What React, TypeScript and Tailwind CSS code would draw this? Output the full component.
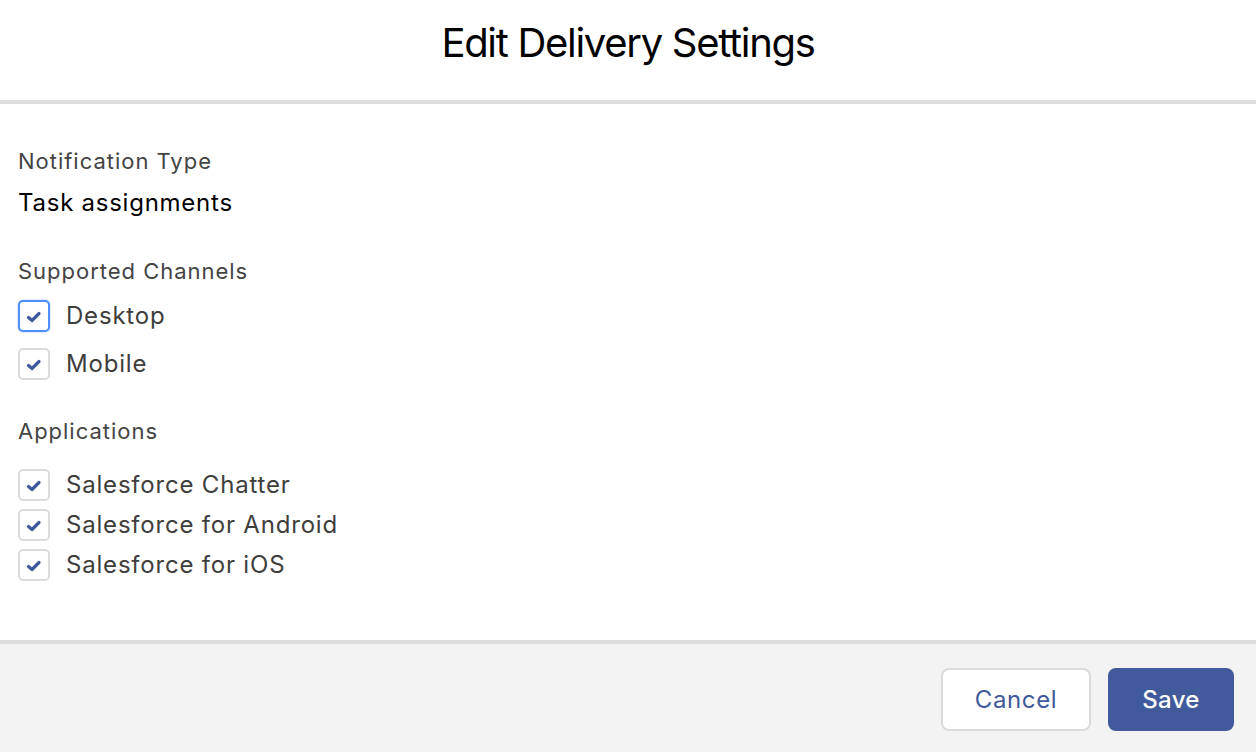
import React from 'react'

function Check({ label, focused }: { label: string; focused?: boolean }) {
    return (
        <label className="flex items-center gap-[16px] h-8">
            <span
                className={
                    focused
                        ? 'w-8 h-8 rounded-[5px] border-2 border-[#4f8ff7] bg-white flex items-center justify-center shadow-[0_0_2px_#8fb8fb]'
                        : 'w-8 h-8 rounded-[5px] border-2 border-[#dddbda] bg-white flex items-center justify-center'
                }
            >
                <svg width="16" height="14" viewBox="0 0 16 14" className="mt-[2px]">
                    <path d="M2.5 7.5 L6 10.5 L13 3.5" fill="none" stroke="#3f5a9c" strokeWidth="3.2" strokeLinecap="round" strokeLinejoin="round" />
                </svg>
            </span>
            <span className="text-[24px] text-[#3e3e3c] leading-8 tracking-[0.8px]">{label}</span>
        </label>
    )
}

export default function App() {
    return (
        <div className="w-[1256px] h-[752px] bg-white flex flex-col font-['Inter','Liberation_Sans',sans-serif]">
            {/* Header */}
            <div className="h-[104px] border-b-4 border-[#dddddd] flex items-center justify-center pb-[14px]">
                <h1 className="text-[40px] leading-[48px] text-black tracking-[-1.3px]">Edit Delivery Settings</h1>
            </div>

            {/* Body */}
            <div className="flex-1 px-[18px] pt-[43px] flex flex-col">
                <div className="text-[22px] leading-7 text-[#444444] tracking-[0.98px]">Notification Type</div>
                <div className="mt-3 text-[24px] leading-8 text-black tracking-[0.75px]">Task assignments</div>

                <div className="mt-[38px] text-[22px] leading-7 text-[#444444] tracking-[0.98px]">Supported Channels</div>
                <div className="mt-[15px] flex flex-col gap-4">
                    <Check label="Desktop" focused />
                    <Check label="Mobile" />
                </div>

                <div className="mt-[37px] text-[22px] leading-7 text-[#444444] tracking-[0.98px]">Applications</div>
                <div className="mt-6 flex flex-col gap-2">
                    <Check label="Salesforce Chatter" />
                    <Check label="Salesforce for Android" />
                    <Check label="Salesforce for iOS" />
                </div>
            </div>

            {/* Footer */}
            <div className="h-[112px] border-t-4 border-[#dddddd] bg-[#f3f3f3] flex items-start justify-end gap-[17px] pt-6 pr-[22px]">
                <button className="w-[150px] h-[63px] rounded-[8px] border-2 border-[#dddbda] bg-white text-[24px] text-[#3f5a9c] tracking-[0.6px]">
                    Cancel
                </button>
                <button className="w-[126px] h-[63px] rounded-[8px] bg-[#405a9b] text-[24px] text-white font-medium tracking-[0.3px]">
                    Save
                </button>
            </div>
        </div>
    )
}
